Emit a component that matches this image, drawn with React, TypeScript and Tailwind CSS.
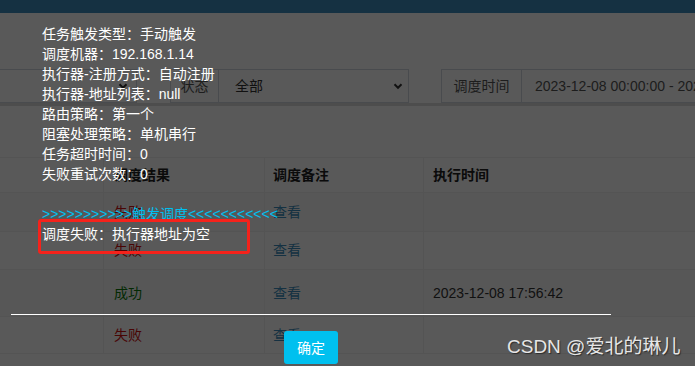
import React from 'react'

const font = { fontFamily: '"Liberation Sans", "Noto Sans CJK SC", sans-serif' }

const logRows = [
    { result: '失败', ok: false, time: '', h: 'h-[39px]' },
    { result: '失败', ok: false, time: '', h: 'h-[38px]' },
    { result: '成功', ok: true, time: '2023-12-08 17:56:42', h: 'h-[47px]' },
    { result: '失败', ok: false, time: '', h: 'h-[37px]' },
]

const triggerLines = [
    '任务触发类型：手动触发',
    '调度机器：192.168.1.14',
    '执行器-注册方式：自动注册',
    '执行器-地址列表：null',
    '路由策略：第一个',
    '阻塞处理策略：单机串行',
    '任务超时时间：0',
    '失败重试次数：0',
]

function Chevron() {
    return (
        <svg width="10" height="10" viewBox="0 0 10 10" className="text-[#333]">
            <path d="M1.5 3.2 L5 6.8 L8.5 3.2" fill="none" stroke="currentColor" strokeWidth="2" />
        </svg>
    )
}

function FilterBar() {
    return (
        <div className="flex h-[34px] mt-[56px] text-[14px] text-[#555]">
            <div className="w-[137px] border border-l-0 border-[#d2d6de] flex items-center justify-end pr-[8px]">
                <Chevron />
            </div>
            <div className="w-[33px]" />
            <div className="w-[49px] border border-[#d2d6de] flex items-center justify-center">状态</div>
            <div className="w-[190px] border border-l-0 border-[#d2d6de] flex items-center justify-between pl-[16px] pr-[5px]">
                <span className="text-[#333]">全部</span>
                <Chevron />
            </div>
            <div className="w-[32px]" />
            <div className="w-[81px] border border-[#d2d6de] flex items-center justify-center">调度时间</div>
            <div className="flex-1 border border-l-0 border-r-0 border-[#d2d6de] flex items-center pl-[13px] whitespace-nowrap overflow-hidden">
                2023-12-08 00:00:00 - 2023-12-08 23:59:59
            </div>
        </div>
    )
}

function LogTable() {
    return (
        <div className="mt-[51px] text-[14px]">
            <div className="flex h-[36px] border-y border-[#f0f0f0] font-bold text-[#222]">
                <div className="w-[104px] border-r border-[#f0f0f0]" />
                <div className="w-[161px] border-r border-[#f0f0f0] flex items-center pl-[10px]">调度结果</div>
                <div className="w-[159px] border-r border-[#f0f0f0] flex items-center pl-[8px]">调度备注</div>
                <div className="flex-1 flex items-center pl-[9px]">执行时间</div>
            </div>
            {logRows.map((r, i) => (
                <div key={i} className={`flex border-b border-[#f0f0f0] ${r.h} ${i % 2 === 0 ? 'bg-[#f9f9f9]' : 'bg-white'}`}>
                    <div className="w-[104px] border-r border-[#f0f0f0]" />
                    <div className={`w-[161px] border-r border-[#f0f0f0] flex items-center pl-[10px] ${r.ok ? 'text-[#0b7a0b]' : 'text-[#d01010]'}`}>
                        {r.result}
                    </div>
                    <div className="w-[159px] border-r border-[#f0f0f0] flex items-center pl-[8px] text-[#3c8dbc]">查看</div>
                    <div className="flex-1 flex items-center pl-[9px] text-[#333]">{r.time}</div>
                </div>
            ))}
        </div>
    )
}

export default function App() {
    return (
        <div className="relative w-[695px] h-[366px] overflow-hidden bg-white" style={font}>
            <div className="h-[13px] bg-[#3c8dbc]" />
            <FilterBar />
            <div className="h-[3px] bg-[#dcdcdc]" />
            <LogTable />

            {/* layer shade */}
            <div className="absolute inset-0 bg-black/65" />

            {/* layer dialog */}
            <div className="absolute left-[11px] top-[24px] w-[600px] text-[14px] leading-[20px]">
                <div className="pl-[31px] h-[290px]">
                    {triggerLines.map((t) => (
                        <div key={t} className="text-white">{t}</div>
                    ))}
                    <div className="h-[20px]" />
                    <div className="text-[#00c0ef]">{'>>>>>>>>>>>触发调度<<<<<<<<<<<'}</div>
                    <div className="text-white">调度失败：执行器地址为空</div>
                </div>
                <div className="h-px bg-white" />
                <div className="flex justify-center pt-[16px]">
                    <button className="w-[54px] h-[33px] rounded-[3px] bg-[#00c0ef] text-white text-[14px]">确定</button>
                </div>
            </div>

            {/* annotation box */}
            <div className="absolute left-[38px] top-[219px] w-[212px] h-[35px] border-[3px] border-[#f5221b] rounded-[3px]" />

            <div className="absolute left-[507px] top-[335px] text-[19px] leading-[24px] text-[#e6e6e6] [text-shadow:1px_1px_1px_rgba(0,0,0,0.5)] whitespace-nowrap">
                CSDN @爱北的琳儿
            </div>
        </div>
    )
}
